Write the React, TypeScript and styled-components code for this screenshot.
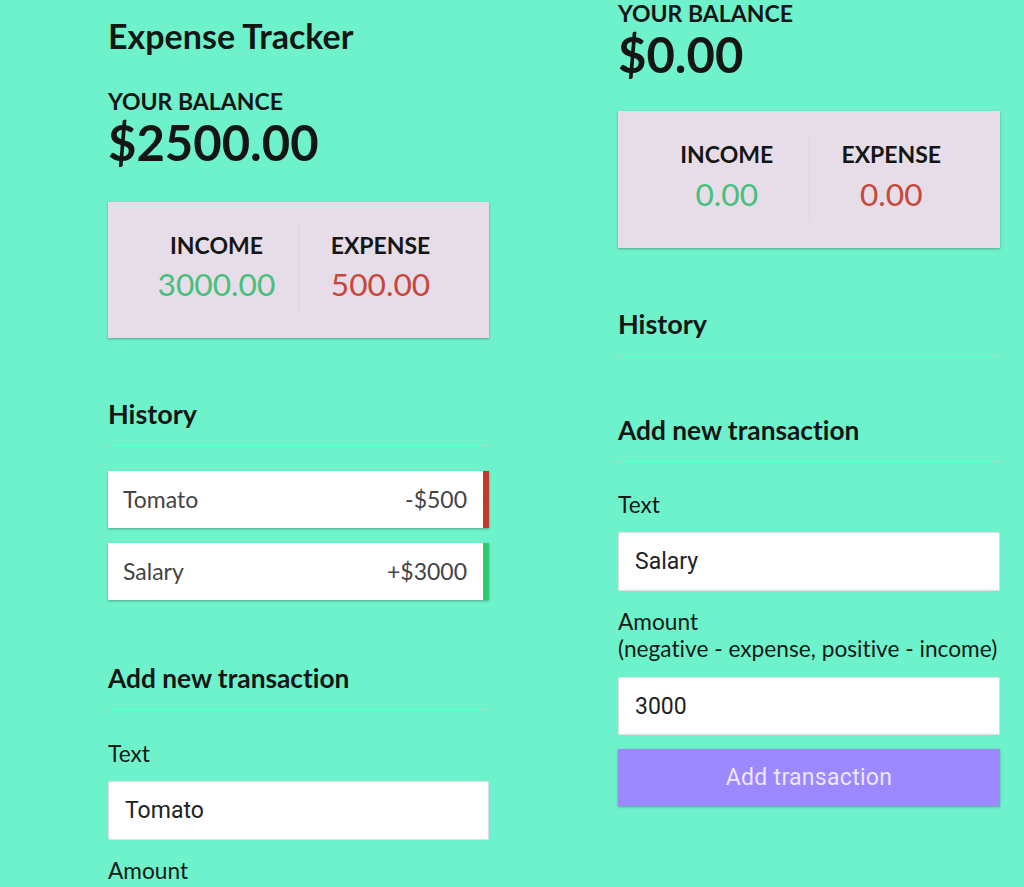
import React from 'react';
import styled, { createGlobalStyle } from 'styled-components';

const Global = createGlobalStyle`
  html, body { margin: 0; padding: 0; background: #6ef2cc; }
  body {
    font-family: Lato, "Noto Sans", sans-serif;
    color: #141614;
    font-variant-ligatures: no-common-ligatures;
  }
  * { box-sizing: border-box; }
`;

const Page = styled.div`
  display: flex;
  align-items: flex-start;
  gap: 129px;
  padding-left: 108px;
  width: 1024px;
  height: 887px;
  overflow: hidden;
  background: #6ef2cc;
`;

const Column = styled.div<{ $top: number; $w: number }>`
  width: ${p => p.$w}px;
  flex: none;
  display: flex;
  flex-direction: column;
  padding-top: ${p => p.$top}px;
`;

const Title = styled.h2`
  margin: 0;
  font-size: 34px;
  line-height: 1.2;
  font-weight: 700;
`;

const BalanceLabel = styled.h4<{ $mt: number }>`
  margin: ${p => p.$mt}px 0 0;
  font-size: 23px;
  line-height: 1;
  font-weight: 700;
  text-transform: uppercase;
`;

const Balance = styled.h1`
  margin: 4.8px 0 0;
  font-size: 49px;
  line-height: 1;
  font-weight: 700;
`;

const Summary = styled.div<{ $mt: number }>`
  margin-top: ${p => p.$mt}px;
  height: 136.5px;
  background: #e7dde9;
  box-shadow: 0 1px 3px rgba(0, 0, 0, 0.12), 0 1px 2px rgba(0, 0, 0, 0.2);
  padding: 23px 27px 0;
  display: flex;
  align-items: flex-start;
`;

const SummaryCell = styled.div`
  flex: 1;
  text-align: center;
  padding: 7px 0 4px;
  & + & {
    border-left: 1px solid #ddd3df;
  }
`;

const CellLabel = styled.h4`
  margin: 0;
  font-size: 23px;
  line-height: 1.2;
  font-weight: 700;
  text-transform: uppercase;
`;

const Money = styled.p<{ $plus?: boolean }>`
  margin: 6px 0 4px;
  font-size: 31.7px;
  line-height: 1.2;
  color: ${p => (p.$plus ? '#46c07b' : '#c9473a')};
`;

const SectionTitle = styled.h3<{ $mt: number; $size: number }>`
  margin: ${p => p.$mt}px 0 0;
  font-size: ${p => p.$size}px;
  line-height: 1.2;
  font-weight: 700;
  padding-bottom: 14.5px;
  border-bottom: 1px solid #b0dac8;
`;

const List = styled.ul`
  list-style: none;
  margin: 24.4px 0 4px;
  padding: 0;
  display: flex;
  flex-direction: column;
  gap: 15px;
`;

const Item = styled.li<{ $plus: boolean }>`
  height: 57px;
  background: #fff;
  box-shadow: 0 1px 3px rgba(0, 0, 0, 0.12), 0 1px 2px rgba(0, 0, 0, 0.2);
  display: flex;
  align-items: center;
  justify-content: space-between;
  padding: 0 16px 0 15px;
  font-size: 23px;
  color: #444;
  border-right: 6.5px solid ${p => (p.$plus ? '#2ecc71' : '#c0392b')};
`;

const Form = styled.form`
  display: flex;
  flex-direction: column;
`;

const Label = styled.label<{ $mt: number }>`
  display: block;
  margin-top: ${p => p.$mt}px;
  font-size: 22.7px;
  line-height: 27.6px;
  color: #161a17;
`;

const Input = styled.input`
  display: block;
  width: 100%;
  height: 58.5px;
  margin-top: 14px;
  border: 1px solid #dedede;
  border-radius: 2px;
  background: #fff;
  padding: 0 16px;
  font-family: Roboto, "Noto Sans", sans-serif;
  font-size: 23px;
  color: #222;
  outline: none;
`;

const Button = styled.button`
  display: block;
  width: 100%;
  height: 57px;
  margin-top: 14px;
  border: 0;
  background: #9c88ff;
  box-shadow: 0 1px 3px rgba(0, 0, 0, 0.12), 0 1px 2px rgba(0, 0, 0, 0.2);
  font-family: Roboto, "Noto Sans", sans-serif;
  font-size: 23px;
  letter-spacing: 0.3px;
  color: rgba(255, 255, 255, 0.82);
  cursor: pointer;
`;

type Tx = { id: number; text: string; amount: number };

function SummaryBox({ income, expense, mt }: { income: string; expense: string; mt: number }) {
  return (
    <Summary $mt={mt}>
      <SummaryCell>
        <CellLabel>Income</CellLabel>
        <Money $plus>{income}</Money>
      </SummaryCell>
      <SummaryCell>
        <CellLabel>Expense</CellLabel>
        <Money>{expense}</Money>
      </SummaryCell>
    </Summary>
  );
}

function History({ items }: { items: Tx[] }) {
  return (
    <>
      <SectionTitle $mt={60} $size={27}>History</SectionTitle>
      {items.length > 0 && (
        <List>
          {items.map(t => (
            <Item key={t.id} $plus={t.amount > 0}>
              <span>{t.text}</span>
              <span>
                {t.amount < 0 ? '-' : '+'}${Math.abs(t.amount)}
              </span>
            </Item>
          ))}
        </List>
      )}
    </>
  );
}

export default function App() {
  const txs: Tx[] = [
    { id: 1, text: 'Tomato', amount: -500 },
    { id: 2, text: 'Salary', amount: 3000 },
  ];
  return (
    <>
      <Global />
      <Page>
        <Column $top={15.8} $w={381}>
          <Title>Expense Tracker</Title>
          <BalanceLabel $mt={33.8}>Your Balance</BalanceLabel>
          <Balance>$2500.00</Balance>
          <SummaryBox income="3000.00" expense="500.00" mt={34.6} />
          <History items={txs} />
          <SectionTitle $mt={59} $size={26.3}>Add new transaction</SectionTitle>
          <Form onSubmit={e => e.preventDefault()}>
            <Label $mt={30} htmlFor="text-l">Text</Label>
            <Input id="text-l" type="text" defaultValue="Tomato" />
            <Label $mt={17} htmlFor="amount-l">Amount</Label>
          </Form>
        </Column>
        <Column $top={0} $w={382}>
          <BalanceLabel $mt={2.3}>Your Balance</BalanceLabel>
          <Balance>$0.00</Balance>
          <SummaryBox income="0.00" expense="0.00" mt={32.1} />
          <History items={[]} />
          <SectionTitle $mt={59} $size={26.3}>Add new transaction</SectionTitle>
          <Form onSubmit={e => e.preventDefault()}>
            <Label $mt={29} htmlFor="text-r">Text</Label>
            <Input id="text-r" type="text" defaultValue="Salary" />
            <Label $mt={17} htmlFor="amount-r">
              Amount <br />
              (negative - expense, positive - income)
            </Label>
            <Input id="amount-r" type="number" defaultValue="3000" />
            <Button type="submit">Add transaction</Button>
          </Form>
        </Column>
      </Page>
    </>
  );
}
